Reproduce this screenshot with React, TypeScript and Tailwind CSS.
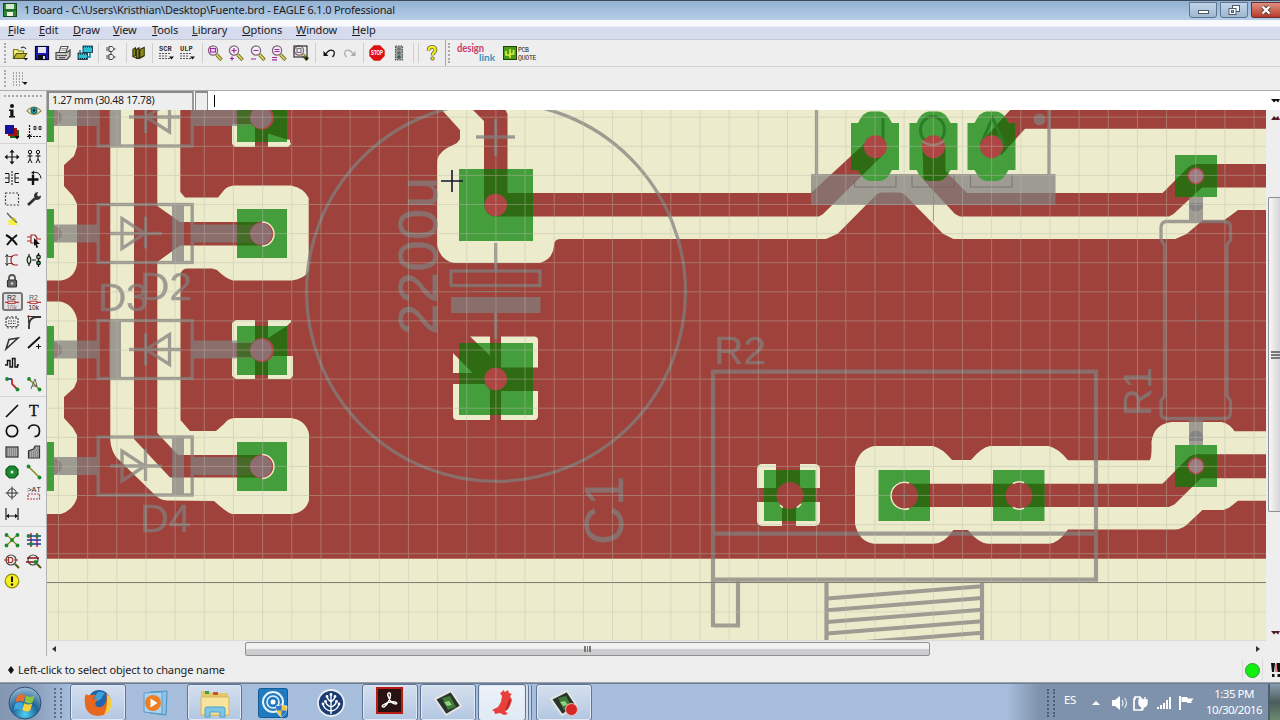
import type { ReactNode } from "react";

type IconProps = { children: ReactNode; size?: number };

const Icon = ({ children, size = 16 }: IconProps) => (
  <svg
    width={size}
    height={size}
    viewBox="0 0 16 16"
    fill="none"
    stroke="#111"
    strokeWidth={1.2}
  >
    {children}
  </svg>
);

const SEPARATOR = "w-px h-5 bg-[#cfcfcf]";
const GRIP = "border-dotted border-[#a9a9a9]";

/* ---------- Toolbar icons ---------- */

const Magnifier = ({ children }: { children?: ReactNode }) => (
  <Icon>
    <path d="M9.5 9.5 14.5 15" stroke="#77761f" strokeWidth={3.4} />
    <path d="M9.5 9.5 14 14.5" stroke="#e3df6a" strokeWidth={1.4} />
    <circle cx={6} cy={5.5} r={4.6} fill="#f6eef6" stroke="#7c6078" />
    {children}
  </Icon>
);

const ScriptIcon = ({ name }: { name: string }) => (
  <Icon>
    <text
      x={1}
      y={6}
      fontSize={7}
      fontWeight={700}
      fontFamily="Liberation Mono, monospace"
      fill="#333"
      stroke="none"
    >
      {name}
    </text>
    <path d="M1 8.5h11M1 11h9M1 13.5h11" stroke="#555" strokeDasharray="2 1" />
    <path d="M11 11.5h5l-2.5 3z" fill="#111" stroke="none" />
  </Icon>
);

const TOOLS: { w: string; icon?: ReactNode }[] = [
  {
    w: "w-[22px]",
    icon: (
      <Icon>
        <path d="M1.5 13.5v-9h4l1 1.5h5v2.5" fill="#f5f07a" stroke="#7d7a1c" />
        <path d="M1.5 13.5 4.5 8.5h10l-3 5z" fill="#b9b52d" stroke="#55530f" />
        <path d="M9 3q3-2 5 1" stroke="#333" />
        <path d="M11.5 13h4.5l-2.2 2.6z" fill="#111" stroke="none" />
      </Icon>
    ),
  },
  {
    w: "w-[21px]",
    icon: (
      <Icon>
        <rect x={1.5} y={1.5} width={13} height={13} fill="#1c1cae" stroke="#050535" />
        <rect x={4} y={2} width={8} height={6} fill="#e4e6ef" stroke="none" />
        <rect x={4} y={10} width={8} height={4.5} fill="#111" stroke="none" />
        <rect x={9} y={11} width={2} height={3} fill="#ddd" stroke="none" />
      </Icon>
    ),
  },
  {
    w: "w-[22px]",
    icon: (
      <Icon>
        <path d="M4 7 6 1.5h7L11 7" fill="#fff" stroke="#555" />
        <path d="M6.5 3.5h5M6 5.2h5" stroke="#777" strokeWidth={0.8} />
        <path d="M1 7.5h11l3-2.5v6l-3 3.5H1z" fill="#c9c9c9" stroke="#444" />
        <path d="M2 10.5h10M4 12.7h6" stroke="#555" />
        <circle cx={10.5} cy={9} r={0.7} fill="#bfae21" stroke="none" />
      </Icon>
    ),
  },
  {
    w: "w-[21px]",
    icon: (
      <Icon>
        <rect x={6} y={1} width={9.5} height={6.5} fill="#27c0d4" stroke="#123" strokeWidth={0.8} />
        <rect x={1} y={8} width={9.5} height={6.5} fill="#27c0d4" stroke="#123" strokeWidth={0.8} />
        <path d="M6 2h9.5M1 9h9.5M1 13.5h9.5" stroke="#111" strokeDasharray="1 1" />
        <path d="M3 5v3M13 8v4h-3" stroke="#187a9a" strokeWidth={1.5} />
      </Icon>
    ),
  },
  { w: "w-[6px]" },
  {
    w: "w-[19px]",
    icon: (
      <Icon>
        <path
          d="M6 1.5h3q4 2.5 0 5H6zM6 9.5h3q4 2.5 0 5H6zM3 3h3M3 5h3M3 11h3M3 13h3M10.5 4h2M10.5 12h2M8 6.5v3"
          stroke="#444"
          strokeWidth={1}
        />
      </Icon>
    ),
  },
  { w: "w-[12px]" },
  {
    w: "w-[14px]",
    icon: (
      <Icon>
        <path d="m1 4 3-2v9l-3 1zM5 4l3-2v11l-3 1zM9 4l5-2.5v9.5l-5 3z" fill="#8e8a1c" stroke="#33310a" />
        <path d="M1 12 7 14.5 14 11" stroke="#33310a" />
      </Icon>
    ),
  },
  { w: "w-[12px]" },
  { w: "w-[16px]", icon: <ScriptIcon name="SCR" /> },
  { w: "w-[26px]", icon: <ScriptIcon name="ULP" /> },
  { w: "w-[4px]" },
  {
    w: "w-[21px]",
    icon: (
      <Magnifier>
        <rect x={3.5} y={3.5} width={5} height={3.5} stroke="#a0259f" />
      </Magnifier>
    ),
  },
  {
    w: "w-[22px]",
    icon: (
      <Magnifier>
        <path d="M6 3v5M3.5 5.5h5M4 11.5v4M2 13.5h4" stroke="#a0259f" />
      </Magnifier>
    ),
  },
  {
    w: "w-[21px]",
    icon: (
      <Magnifier>
        <path d="M3.5 5.5h5M1 14h5" stroke="#a0259f" />
      </Magnifier>
    ),
  },
  {
    w: "w-[22px]",
    icon: (
      <Magnifier>
        <path d="M3.5 4.5h5M3.5 6.5h5M1 12.5h5M1 14.8h5" stroke="#a0259f" />
      </Magnifier>
    ),
  },
  {
    w: "w-[22px]",
    icon: (
      <Magnifier>
        <rect x={1} y={1} width={13} height={11} stroke="#333" />
        <rect x={4} y={3.5} width={4} height={4} stroke="#777" />
        <path d="M11 12.5h5l-2.5 3z" fill="#111" stroke="none" />
      </Magnifier>
    ),
  },
  { w: "w-[6px]" },
  {
    w: "w-[21px]",
    icon: (
      <Icon>
        <path d="M5 9q3-5 7-3.5 3 2.5-.5 6.500" />
        <path d="M2.5 6v5h5z" fill="#111" stroke="none" />
      </Icon>
    ),
  },
  {
    w: "w-[21px]",
    icon: (
      <Icon>
        <path d="M11 9Q8 4 4 5.5 1 8 4.500 12" stroke="#aaa" />
        <path d="M13.5 6v5h-5z" fill="#aaa" stroke="none" />
      </Icon>
    ),
  },
  { w: "w-[6px]" },
  {
    w: "w-[22px]",
    icon: (
      <Icon>
        <path d="M5 .3h6L15.7 5v6L11 15.7H5L.3 11V5z" fill="#e01010" stroke="none" />
        <text
          x={2}
          y={10.4}
          fontSize={6.4}
          fontWeight={700}
          fontFamily="Liberation Sans, sans-serif"
          fill="#fff"
          stroke="none"
          textLength={12}
          lengthAdjust="spacingAndGlyphs"
        >
          STOP
        </text>
      </Icon>
    ),
  },
  {
    w: "w-[22px]",
    icon: (
      <Icon>
        <rect x={4.5} y={1} width={7} height={14} fill="#9aa39c" stroke="#555" strokeDasharray="1.5 1" />
        <circle cx={8} cy={4} r={1.8} fill="#707a72" stroke="none" />
        <circle cx={8} cy={8} r={1.8} fill="#606a62" stroke="none" />
        <circle cx={8} cy={12} r={1.8} fill="#39634d" stroke="none" />
      </Icon>
    ),
  },
  { w: "w-[6px]" },
  { w: "w-[4px]" },
  {
    w: "w-[24px]",
    icon: (
      <Icon>
        <path d="M4.5 5.5Q4.5 2 8 2t3.5 3q0 1.5-2 3-1 1-1 2.3" stroke="#333" strokeWidth={3.6} />
        <path d="M4.5 5.5Q4.5 2 8 2t3.5 3q0 1.5-2 3-1 1-1 2.3" stroke="#f3ee16" strokeWidth={2.4} />
        <circle cx={8.5} cy={13.5} r={1.7} fill="#f3ee16" stroke="#333" strokeWidth={0.7} />
      </Icon>
    ),
  },
];

/* ---------- Left palette ---------- */

const GREEN = "#1c8a2c";
const dot = (cx: number, cy: number) => (
  <circle cx={cx} cy={cy} r={1.9} fill={GREEN} stroke="none" />
);

const infoIcon = (
  <Icon>
    <circle cx={8} cy={3} r={2} fill="#111" stroke="none" />
    <path d="M5 6.5h4.5V13H11v1.5H5V13h1.3V8H5z" fill="#111" stroke="none" />
  </Icon>
);
const showIcon = (
  <Icon>
    <path d="M1 8q7-8 14 0-7 7-14 0z" fill="#fff" stroke="#9a8c3e" />
    <circle cx={8} cy={7.5} r={3} fill="#29a3ab" stroke="#176a70" />
    <circle cx={8} cy={7.5} r={1.2} fill="#111" stroke="none" />
  </Icon>
);
const layersIcon = (
  <Icon>
    <rect x={6} y={6} width={9} height={8} fill="#156a1c" stroke="none" />
    <rect x={4} y={4} width={9} height={8} fill="#a11313" stroke="none" />
    <rect x={1} y={1} width={9} height={9} fill="#13139b" stroke="none" />
    <path d="M10.5 12h5L13 15.5z" fill="#111" stroke="none" />
  </Icon>
);
const markIcon = (
  <Icon>
    <path d="M3.5 1v14M1 12.5h14" strokeDasharray="2 1" />
    <path d="M1.5 10.5 3.5 12.5 5.5 10.5M8 2.5v3h2v-3zM13 2.5v3h2v-3z" strokeWidth={0.9} />
  </Icon>
);
const moveIcon = (
  <Icon>
    <path d="M8 2v12M2 8h12" />
    <path d="m8 .5 2.5 3h-5zM8 15.5l2.5-3h-5zM.5 8l3-2.5v5zM15.5 8l-3-2.5v5z" fill="#111" stroke="none" />
  </Icon>
);
const copyIcon = (
  <Icon>
    <circle cx={4} cy={3} r={1.7} strokeWidth={1} />
    <circle cx={12} cy={3} r={1.7} strokeWidth={1} />
    <path d="M4 5v5l-2 4M4 10l2 4M1.5 7h5M12 5v5l-2 4M12 10l2 4M9.5 7h5" strokeWidth={1} />
  </Icon>
);
const mirrorIcon = (
  <Icon>
    <path d="M1 3.5h4v9H1M1 8h4M15 3.5h-4v9h4M11 8h4" strokeWidth={1} />
    <path d="M8 1v14" strokeDasharray="2 1" strokeWidth={1} />
  </Icon>
);
const rotateIcon = (
  <Icon>
    <path d="M1.5 9.5h11M7 4.5v10.5" strokeWidth={2.4} />
    <path d="M7 2.5q7-1.5 8 6" strokeWidth={1} />
    <path d="M5 2.8 8 .8v3.5z" fill="#111" stroke="none" />
  </Icon>
);
const groupIcon = (
  <Icon>
    <rect x={1.5} y={2} width={13} height={12} strokeDasharray="2 1.5" stroke="#444" />
  </Icon>
);
const changeIcon = (
  <Icon>
    <path d="M2 14 9 7.5" stroke="#333" strokeWidth={2.8} />
    <path d="M8 4q1-3 4-3l-1 3 1.5 1.5 2.5-1q0 4-4 4.5-3 0-3-5z" fill="#333" stroke="none" />
  </Icon>
);
const cutIcon = (
  <Icon>
    <path d="M4 9h7l3 5H5z" fill="#f5f13c" stroke="none" />
    <path d="M3 2 9 8.5l4 3" stroke="#555" />
    <path d="m8 7 3 2.5" stroke="#b6b224" strokeWidth={2.5} />
  </Icon>
);
const deleteIcon = (
  <Icon>
    <path d="M2 3q6 3 11 10M13 3Q7 7 3 13" strokeWidth={2} />
  </Icon>
);
const addIcon = (
  <Icon>
    <path d="M5 3h4q4 4 0 8H5zM1 5h4M1 9h4M12 7h3" stroke="#a12b2b" />
    <path d="m8 6 6 6h-3l1 3.5-1.5.4L9.2 12.5 8 14z" fill="#111" stroke="none" />
  </Icon>
);
const pinswapIcon = (
  <Icon>
    <path d="M14 3h-3Q7 3 7 8t4 5h3M5 4.5h4M5 11.5h4" stroke="#a12b2b" />
    <path d="M3 3v10M1.5 5 3 2.5 4.5 5M1.5 11 3 13.5 4.5 11" stroke="#333" strokeWidth={1} />
  </Icon>
);
const replaceIcon = (
  <Icon>
    <ellipse cx={3} cy={8} rx={1.8} ry={3.5} fill="#ccebcc" stroke="#222" />
    <path d="M3 2v2.5M3 11.5V14M6 8h4M12.5 1v14" />
    <circle cx={12.5} cy={5} r={1.8} fill="#9c9" />
    <circle cx={12.5} cy={11} r={1.8} fill="#396" />
  </Icon>
);
const lockIcon = (
  <Icon>
    <path d="M5 7V5q0-3 3-3t3 3v2" stroke="#555" strokeWidth={1.8} />
    <rect x={3.5} y={7} width={9} height={7} rx={1} fill="#666" stroke="#333" />
    <circle cx={8} cy={10.5} r={1.3} fill="#ccc" stroke="none" />
  </Icon>
);

const TagIcon = ({ top, bottom, bold }: { top: string; bottom: string; bold?: boolean }) => (
  <Icon>
    <text x={3} y={6} fontSize={7} fontFamily="Liberation Sans, sans-serif" fill={bold ? "#111" : "#555"} stroke="none">
      {top}
    </text>
    <path d="M1 8.3h3M11 8.3h4" stroke="#b03030" />
    <rect x={4} y={7.2} width={7} height={2.4} stroke="#b03030" strokeWidth={0.9} />
    <text x={2.5} y={15.6} fontSize={6.5} fontFamily="Liberation Sans, sans-serif" fill={bold ? "#777" : "#111"} stroke="none">
      {bottom}
    </text>
  </Icon>
);

const nameIcon = (
  <span className="flex h-[19px] w-[21px] items-center justify-center rounded-[3px] border-2 border-[#777] bg-[#e2e2e2]">
    <TagIcon top="R2" bottom="10k" bold />
  </span>
);
const smashIcon = (
  <Icon>
    <rect x={2} y={4} width={12} height={8.5} stroke="#444" strokeDasharray="2 1" />
    <path d="M4 7h8M4 9.5h8M4 2v2M8 2v2M12 2v2M4 13v2M8 13v2M12 13v2" stroke="#444" strokeDasharray="1.5 1" />
  </Icon>
);
const miterIcon = (
  <Icon>
    <path d="M3 15V11Q3 4 10 3h5" stroke="#333" strokeWidth={1.8} />
    <path d="M2.5 9V2.5H9" stroke="#333" strokeWidth={1} />
    <circle cx={2.5} cy={2.5} r={1.2} fill="#a12b2b" stroke="none" />
  </Icon>
);
const splitIcon = (
  <Icon>
    <path d="M2 14 5 4.5 14 3zM5 4.5 2 14" stroke="#333" strokeWidth={1.5} />
  </Icon>
);
const optimizeIcon = (
  <Icon>
    <path d="m2 13 12-11" strokeWidth={1.8} />
    <path d="M12.5 9v5M10 11.5h5" strokeWidth={1} />
  </Icon>
);
const meanderIcon = (
  <Icon>
    <path d="M1 10h2.5V5.5H6V12h2.5V3.5H11V12h2.5v-2H15" strokeWidth={1.4} />
  </Icon>
);
const routeIcon = (
  <Icon>
    <path d="M3 3h5" stroke="#1b3fb0" strokeWidth={1.8} />
    <path d="M8 3v5l5 5" stroke="#c02828" strokeWidth={1.8} />
    {dot(3, 3)}
    {dot(13.5, 13.5)}
  </Icon>
);
const ripupIcon = (
  <Icon>
    <path d="m3 3 11 11" stroke="#8b8a20" strokeWidth={1.4} />
    <path d="M9 3 6 10h5zM6 10l-1 3" stroke="#444" strokeWidth={0.8} />
    {dot(3, 3)}
    {dot(13.5, 13.5)}
  </Icon>
);
const wireIcon = (
  <Icon>
    <path d="M2 14 14 2" strokeWidth={1.7} />
  </Icon>
);
const textIcon = (
  <Icon>
    <text x={8} y={13} textAnchor="middle" fontSize={16} fontFamily="Liberation Serif, serif" fill="#111" stroke="#111" strokeWidth={0.3}>
      T
    </text>
  </Icon>
);
const circleIcon = (
  <Icon>
    <circle cx={8} cy={8} r={5.7} strokeWidth={1.7} />
  </Icon>
);
const arcIcon = (
  <Icon>
    <path d="M2.5 6q1-4 5.5-4 5.5 0 5.5 6 0 5.5-5 5.7" strokeWidth={1.7} />
  </Icon>
);
const rectIcon = (
  <Icon>
    <rect x={2} y={3} width={12} height={10} fill="#aaa" stroke="#333" />
    <path d="M3 5h11M3 7h11M3 9h11M3 11h11" stroke="#666" strokeDasharray="1 1" />
  </Icon>
);
const polygonIcon = (
  <Icon>
    <path d="M2.5 14V7l5-2L9 2h4.5v12z" fill="#aaa" stroke="#333" />
    <path d="M3 8h10M3 10h10M3 12h10M8 6h5M9 4h5" stroke="#666" strokeDasharray="1 1" />
  </Icon>
);
const viaIcon = (
  <Icon>
    <path d="M5.5 2h5L14 5.5v5L10.5 14h-5L2 10.5v-5z" fill={GREEN} stroke="#0e5e1a" />
    <circle cx={8} cy={8} r={1.5} fill="#e8f5e8" stroke="none" />
  </Icon>
);
const signalIcon = (
  <Icon>
    <path d="m3 3 11 11" stroke="#8b8a20" strokeWidth={1.5} />
    {dot(2.5, 2.5)}
    {dot(13.5, 13.5)}
  </Icon>
);
const holeIcon = (
  <Icon>
    <circle cx={8} cy={8} r={4.2} stroke="#333" strokeWidth={1} />
    <path d="M8 1.5v13M1.5 8h13" stroke="#333" strokeWidth={1} />
  </Icon>
);
const attributeIcon = (
  <Icon>
    <text x={1} y={6.5} fontSize={8} fontFamily="Liberation Mono, monospace" fill="#333" stroke="none" textLength={14}>
      {">AT"}
    </text>
    <rect x={2} y={9} width={11.5} height={5} stroke="#b04040" strokeDasharray="2 1" />
  </Icon>
);
const dimensionIcon = (
  <Icon>
    <path d="M2 2v12M14 2v12M3 10h10" strokeWidth={1.1} />
    <path d="m2 10 3-2.2v4.4zM14 10l-3-2.2v4.4z" fill="#111" stroke="none" />
  </Icon>
);
const ratsnestIcon = (
  <Icon>
    <path d="m2 2 12 12M14 2 2 14" stroke="#8b8a20" />
    {dot(2.5, 3)}
    {dot(13.5, 3)}
    {dot(8, 8)}
    {dot(2.5, 13.5)}
    {dot(13.5, 13.5)}
  </Icon>
);
const autoIcon = (
  <Icon>
    <path d="M5 1v14M11 1v14" stroke="#c02828" strokeWidth={1.5} />
    <path d="M1 4h14M1 8h14M1 12h14" stroke="#2233a8" strokeWidth={1.5} />
    {dot(2.5, 4)}
    {dot(11, 4)}
    {dot(5, 12)}
  </Icon>
);
const ercIcon = (
  <Icon>
    <circle cx={7} cy={7} r={5} stroke="#444" />
    <path d="M4.5 4.5h3q3 2.5 0 5h-3zM0 7h4M10 7h4" stroke="#a12b2b" />
    <path d="m11 11 4 4" stroke="#55530f" strokeWidth={2} />
  </Icon>
);
const drcIcon = (
  <Icon>
    <circle cx={7} cy={7} r={5} stroke="#444" />
    <path d="M1 5h12M0 9h11" stroke="#8b1515" strokeWidth={1.6} />
    <path d="m11 11 4 4" stroke="#55530f" strokeWidth={2} />
    {dot(9.5, 9)}
  </Icon>
);
const errorsIcon = (
  <Icon>
    <circle cx={8} cy={8} r={6.8} fill="#f5f01b" stroke="#918d15" />
    <path d="M8 3.5V9" strokeWidth={2} />
    <circle cx={8} cy={11.5} r={1.2} fill="#111" stroke="none" />
  </Icon>
);

const PALETTE: { className: string; rows: ReactNode[][] }[] = [
  {
    className: "border-b pb-px mb-[3px]",
    rows: [
      [infoIcon, showIcon],
      [layersIcon, markIcon],
    ],
  },
  {
    className: "border-b pb-[2px] mb-[3px]",
    rows: [
      [moveIcon, copyIcon],
      [mirrorIcon, rotateIcon],
      [groupIcon, changeIcon],
      [cutIcon, null],
      [deleteIcon, addIcon],
      [pinswapIcon, replaceIcon],
      [lockIcon, null],
      [nameIcon, <TagIcon top="R2" bottom="10k" />],
      [smashIcon, miterIcon],
      [splitIcon, optimizeIcon],
      [meanderIcon, null],
      [routeIcon, ripupIcon],
    ],
  },
  {
    className: "border-b pb-[2px] mb-[3px]",
    rows: [
      [wireIcon, textIcon],
      [circleIcon, arcIcon],
      [rectIcon, polygonIcon],
      [viaIcon, signalIcon],
      [holeIcon, attributeIcon],
      [dimensionIcon, null],
    ],
  },
  {
    className: "",
    rows: [
      [ratsnestIcon, autoIcon],
      [ercIcon, drcIcon],
      [errorsIcon, null],
    ],
  },
];

const Palette = () => (
  <div className="w-[47px] shrink-0 border-r border-[#b4b4b4] bg-[#eeeeee] pt-1">
    <div className={`mx-1 mb-[4px] border-t-2 ${GRIP}`} />
    {PALETTE.map(({ className, rows }, i) => (
      <div key={i} className={`border-[#d4d4d4] ${className}`}>
        {rows.map((row, j) => (
          <div key={j} className="flex h-[20.6px] items-center pl-px">
            {row.map((icon, k) => (
              <div key={k} className="flex w-[22px] justify-center">
                {icon}
              </div>
            ))}
          </div>
        ))}
      </div>
    ))}
  </div>
);

/* ---------- Board ---------- */

const GRID_X = Array.from({ length: 42 }, (_, i) => 58.5 + 29.16 * i);
const GRID_Y = Array.from({ length: 18 }, (_, i) => 117.2 + 29.1 * i);

const SQUARE_PADS = [
  [22, 93, 32, 49],
  [22, 209, 32, 49],
  [22, 326, 32, 49],
  [22, 442, 32, 49],
  [237, 93, 50, 49],
  [237, 209, 50, 49],
  [237, 326, 50, 49],
  [237, 442, 50, 49],
  [459, 169, 74, 72],
  [459, 343, 74, 72],
  [1175, 155, 42, 42],
  [1175, 445, 42, 42],
  [764, 470, 51.5, 51],
  [878.5, 470, 51.5, 51],
  [993, 470, 51.5, 51],
];

const Pads = () => (
  <>
    {SQUARE_PADS.map(([x, y, w, h]) => (
      <rect key={`${x}-${y}`} x={x} y={y} width={w} height={h} />
    ))}
    {[875, 933.5, 991.5].map((x) => (
      <path
        key={x}
        d={`M${x - 24} 123h7q5-11 12-11.5h10q7 .5 12 11.5h7v47h-7q-5 10.5-12 11h-10q-7-.5-12-11h-7z`}
      />
    ))}
  </>
);

const Traces = () => (
  <>
    {/* diode column */}
    <path d="M134 100V439L170 477.5H262V455H178L157.3 433V262L180 245.5H262V222H180L157.3 206V100z" />
    {/* thermal spokes of the diode pads */}
    <path d="M255 108h40v32l-8-.5-19-6V150h-13zM230 110h30v14h-30z" />
    <path d="M255 316h13v22l19-12 7-4v34h-26v28h-13zM230 343h30v14h-30z" />
    {/* C1 + */}
    <path d="M472 109 484 121V205q2 11.5 12 11.5H819L823 214 885 153 864 144 811 193H507.5V114L505 109z" />
    {/* C1 - */}
    <path d="M490 330h11v37.5h45V391h-45v35h-11v-36l-5-6h-35v-11h22.7L447 347v-15h18.5L490 355.7z" />
    {/* regulator */}
    <path d="M922.5 147h23v24L967 193H1162.5L1188 167.5q4-3.5 9-3.5H1266v23.5H1202L1173.5 214l-4.5 2.5H960L955 214 923.5 180z" />
    <path d="M982 141 1011 109H1270V128.7H1025L1001.5 155z" />
    {/* trimmer */}
    <path d="M776 460h24v28h24v14h-28v28h-14v-28h-28v-14h22z" />
    <path d="M904 483.7H1162.5L1188 458q4-3.7 9-3.7H1266v24H1201L1174.7 504.3 1169 507H904z" />
    <circle cx={262} cy={117.5} r={12} />
    <circle cx={262} cy={350} r={12} />
  </>
);

const DRILLS = [
  [495.7, 205, 11.3],
  [495.7, 379, 11.3],
  [875.4, 146.7, 11.5],
  [933.5, 146.7, 11.5],
  [991.5, 146.7, 11.5],
  [1196, 176, 8.5],
  [1196, 466, 8.5],
  [262, 117.5, 12],
  [262, 233.8, 12],
  [262, 350, 12],
  [262, 466.5, 12],
];

type DiodeProps = { y: number; flip?: boolean };

const Diode = ({ y, flip }: DiodeProps) => (
  <>
    <path
      d={`M54 ${y - 9}H98v18H54zM193 ${y - 9}H237v18H193z`}
      fill="#827f7d"
      stroke="none"
    />
    <rect x={flip ? 109 : 172} y={y - 29} width={12} height={58} fill="#827f7d" stroke="none" />
    <rect x={98.2} y={y - 29} width={94} height={58} />
    {flip ? (
      <path d={`M129 ${y}H181M169.5 ${y - 15}v30L146 ${y}zM145.5 ${y - 16}v32`} />
    ) : (
      <path d={`M110 ${y}H162M122 ${y - 15}v30L145 ${y}zM145.5 ${y - 17}v32`} />
    )}
  </>
);

const THREADS = [598.5, 610.3, 622, 633.5, 645];

const Board = () => (
  <svg className="block h-[530px] w-[1219px]" viewBox="47 110 1219 530">
    <defs>
      <clipPath id="pads">
        <Pads />
      </clipPath>
    </defs>

    <rect x={47} y={110} width={1219} height={530} fill="#ececcc" />
    <rect x={47} y={110} width={1219} height={448.7} fill="#9e423b" />

    {/* clearance around the copper */}
    <g fill="#ececcc">
      <path d="M47 110H77V147L74 156 64 165V186L73 196 77 204V264Q75 278 61 280.5H47z" />
      <path d="M47 301.5H59Q73 303 77 319V381L74 388 64 397V418L73 428 77 435V498Q73 510 61 514H47z" />
      <path d="M110.3 110H180.3V192L185 197.6H218L225 189Q229 185.5 235 185.5H291Q304 188 308.7 198V271Q304 279 292 280.5H233Q226 279 217 270L212 268.5H187Q181 269 180.5 275V420L190 431H216L224 424Q228 418 235 418H291Q306 420 309 434V500Q306 512 292 514H232Q226 512 214 501L167 500.5Q160 500 155 495L116 457Q111 450 110.3 440z" />
      <path d="M232 100H290V142L291 144 288 147H235L232 144z" />
      <path d="M236 320H291V322L287 326 293 356V376L290 379H236L232 376V323z" />
      <path d="M441 109 460 130V139L457 143 447 148Q437 154 437 163V245Q440 260 454 263H540Q553 259 554 246 554 239 560 239H826L837.6 233.7 877 194Q879 192.5 882 192.5H900L904 194 943 233.7 953.4 239H1175.4L1186.5 234 1202.4 220.5H1223.5L1230 216 1238 210H1266V109z" />
      <rect x={453} y={336.5} width={85} height={83.5} rx={4} />
      <rect x={757} y={464} width={63} height={62} rx={5} />
      <path d="M874 446H933Q942 448 952 460H971Q982 447 990 446H1048.5Q1058 448 1068 460.3H1149.5Q1152 459 1151.5 441.7 1154 424 1171.7 422H1221.6Q1230 424 1234.6 431.3H1266V500.7H1238L1229 507.7 1223.5 510H1202.4L1186.5 525Q1181 529.3 1175 529.5H1068Q1058 543.7 1049 543.7H988Q978 543 968 530H953.4Q944 543.7 934 543.7H874Q859 542 855 524V466Q859 449 874 446z" />
    </g>

    <g fill="#9e423b">
      <Traces />
    </g>

    {/* silkscreen */}
    <g fill="none" stroke="#827f7d" strokeWidth={3.3} opacity={0.73}>
      <Diode y={117} flip />
      <Diode y={233.5} />
      <Diode y={349.5} flip />
      <Diode y={466} />

      <circle cx={496} cy={291.8} r={189.5} />
      <path d="M476 137H515M495.7 119V156M495.7 243V271M495.7 313V339" />
      <rect x={451} y={271} width={89} height={14.5} />
      <rect x={451} y={297} width={89.5} height={16} fill="#827f7d" stroke="none" />

      <path d="M816.5 110V175M1049 110V175" />
      <rect x={811} y={174} width={244.5} height={31} fill="#827f7d" stroke="none" />
      <circle cx={1039.5} cy={119.5} r={6} fill="#827f7d" stroke="none" />

      <path d="M1189 197h14v24h-14zM1189 420h14v26h-14z" fill="#827f7d" stroke="none" />
      <path d="M1166 221.5H1225Q1230.5 222 1230.5 227V240L1227 245V396L1230.5 401V413Q1230 418.5 1225 418.5H1166Q1161 418 1161 413V401L1164.5 396V245L1161 240V227Q1161.5 222 1166 221.5z" />

      <path
        d="M713 627V371.7H1096V579.7H713M713 533.7H1096M713 625.5H738V580M826.5 582V640M982 582V640"
        strokeWidth={4.2}
      />
      {THREADS.map((y) => (
        <path key={y} d={`M827 ${y} 982 ${y - 12.2}`} strokeWidth={4} />
      ))}
    </g>
    <g
      fill="#827f7d"
      stroke="#827f7d"
      strokeWidth={0.4}
      opacity={0.73}
      fontFamily="Liberation Sans, Arial, sans-serif"
    >
      <g fontSize={38}>
        <text x={98} y={310.5} textLength={50} lengthAdjust="spacingAndGlyphs">D3</text>
        <text x={140} y={299.7} textLength={52} lengthAdjust="spacingAndGlyphs">D2</text>
        <text x={140} y={531.7} textLength={51} lengthAdjust="spacingAndGlyphs">D4</text>
        <text x={714} y={363.7} textLength={52} lengthAdjust="spacingAndGlyphs">R2</text>
        <text transform="translate(1151 416) rotate(-90)">R1</text>
      </g>
      <g fontSize={56}>
        <text transform="translate(437 335) rotate(-90)" textLength={158} lengthAdjust="spacingAndGlyphs">2200u</text>
        <text transform="translate(623 545) rotate(-90)" textLength={69} lengthAdjust="spacingAndGlyphs">C1</text>
      </g>
    </g>

    {/* pads */}
    <g fill="#459e3c">
      <Pads />
    </g>
    <g fill="#2f6b12" clipPath="url(#pads)">
      <Traces />
    </g>
    <g fill="none" stroke="#2a7d26" strokeWidth={3}>
      <path d="M883 118V144M981 144 992.6 118 1004 144M984 137H1001" />
      <ellipse cx={932.5} cy={130} rx={12} ry={13.5} />
    </g>
    <g fill="#ad4643">
      {DRILLS.map(([x, y, r]) => (
        <circle key={`${x}-${y}`} cx={x} cy={y} r={r} />
      ))}
    </g>
    <g fill="#9e423b">
      <circle cx={790} cy={495.5} r={13.5} />
      <circle cx={904.5} cy={495.5} r={13.5} />
      <circle cx={1019} cy={495.5} r={13.5} />
    </g>
    <g fill="none" stroke="#ececcc" strokeWidth={1.5}>
      <path d="M262 222a12 12 0 0 1 0 24M262 454.5a12 12 0 0 1 0 24" />
      <path d="M909 483a13.5 13.5 0 1 0 0 25.5" />
      <path d="M1013 483.5a13.5 13.5 0 0 1 11-.8M1013 507.5a13.5 13.5 0 0 0 11 .8M780 505a13.5 13.5 0 0 0 3 2.5M797 507.5a13.5 13.5 0 0 0 4-3.5" />
    </g>
    <g fill="#8c6d70">
      {[117.5, 233.8, 350, 466.5].map((y) => (
        <g key={y}>
          <circle cx={261} cy={y} r={10.8} />
          <rect x={237} y={y - 9} width={15} height={18} opacity={0.25} />
          <path d={`M54 ${y - 8}q8 2 8 8t-8 8z`} opacity={0.6} />
        </g>
      ))}
      <circle cx={1196} cy={176} r={7} fill="#9a7c80" />
      <circle cx={1196} cy={466} r={7} fill="#9a7c80" />
      <path d="M1189 203h14q0 8-7 8.5-7-.5-7-8.5zM1189 438q0-7 7-7.5 7 .5 7 7.5v3h-14z" fill="#848484" />
      <path d="M922 141q11 8 22 0" fill="none" stroke="#a07a70" strokeWidth={2.5} />
    </g>

    {/* thin reference lines */}
    <g fill="none" stroke="#6b6560" strokeWidth={1}>
      <path d="M854.5 181V187H896V175M912 175V187H954V175M970.5 175V187H1012V175M933.5 187V221" opacity={0.7} />
      <path d="M472 291.5H520M495.7 271V313M1184 320.5H1208M1196 308V333M899 495.5H910M904.5 490V501" opacity={0.6} />
      <path d="M47 582.5H1266" />
    </g>

    {/* grid */}
    <g stroke="#bdbcae" strokeWidth={1} opacity={0.42}>
      {GRID_X.map((x) => (
        <path key={x} d={`M${x} 110V640`} />
      ))}
      {GRID_Y.map((y) => (
        <path key={y} d={`M47 ${y}H1266`} />
      ))}
    </g>

    <path d="M441 181H463M452 170V192" stroke="#151530" strokeWidth={1.6} />
  </svg>
);

/* ---------- Taskbar ---------- */

const TASK_BUTTON =
  "flex h-[37px] shrink-0 items-center justify-center rounded-[3px] border border-[#5f7796] bg-linear-to-b from-[#d5e0ef] to-[#b3c7e2] shadow-[inset_0_0_0_1px_#dfe8f4]";
const TASK_PLAIN = "flex h-[37px] shrink-0 items-center justify-center";

const Camtasia = ({ recording }: { recording?: boolean }) => (
  <svg width={30} height={30} viewBox="0 0 30 30">
    <path d="M2 11 18 3l10 15-15 9z" fill="#2b342b" stroke="#e4e6e2" strokeWidth={2} />
    <path d="m9 10 8-2 6 11-8 3z" fill="#3f7a38" />
    <path d="m11 14 5-1 3 4-5 1z" fill="#8fd07c" />
    {recording && <circle cx={22.5} cy={21.5} r={6} fill="#d62727" stroke="#f3b8b8" />}
  </svg>
);

const Taskbar = () => (
  <div className="flex h-[38px] items-center border-t border-[#6d7f96] bg-[#a6bddc] font-['Noto_Sans',sans-serif]">
    <div className="flex h-full w-[70px] shrink-0 items-center bg-linear-to-r from-[#8497b2] via-[#8ca0bd] to-[#a6bddc] pl-2">
      <svg width={34} height={34} viewBox="0 0 34 34">
        <defs>
          <radialGradient id="orb" cx=".5" cy=".85" r=".8">
            <stop offset="0" stopColor="#4fd0f2" />
            <stop offset=".5" stopColor="#1d6596" />
            <stop offset="1" stopColor="#8fb3cf" />
          </radialGradient>
        </defs>
        <circle cx={17} cy={17} r={16} fill="url(#orb)" stroke="#2f4e70" />
        <path d="M9 10q4-3 8-1l-1.5 7q-4-2-8 .5z" fill="#ea6a30" />
        <path d="M18 9.5q4 2.5 8.5 0l-2 7q-4 2-8-.5z" fill="#8cc63e" />
        <path d="M7.2 17.8q4-3 8-.8L13.5 24q-4-2-8 .5z" fill="#3fa5e0" />
        <path d="M16.2 17.2q4 2.5 8 .3l-2 7q-4 2-8-.5z" fill="#f8cf3c" />
      </svg>
      <div className="ml-[12px] h-[30px] w-[8px] border-x-2 border-dotted border-[#5b6f8a]" />
    </div>

    <div className={`${TASK_BUTTON} w-[56px]`}>
      <svg width={30} height={30} viewBox="0 0 30 30">
        <circle cx={16} cy={13} r={11} fill="#1e66ad" />
        <path d="M14 5q4-3 8 1-3 1-3 4l-4 3-4-2z" fill="#3fa3da" />
        <path d="M3 6q2 2 5 1 4-1 6 1-3 0-4 3 3 0 5 1-4 2-2 6 4 3 8-1 4-5 2-12 6 5 5 12-2 11-13 11Q3 27 2 16 1 9 3 6z" fill="#e6671f" />
        <path d="M24 6q6 6 4 13-2 6-7 8 4-8 3-21z" fill="#f8cf3c" />
      </svg>
    </div>
    <div className={`${TASK_PLAIN} w-[61px] pr-1`}>
      <svg width={26} height={26} viewBox="0 0 26 26">
        <path d="m8 2 17-1-1 24-16-2z" fill="#8ec3e5" stroke="#4a8fc0" />
        <path d="m2 3 18-1v22L2 22z" fill="#a9d3ee" stroke="#5d9cc7" />
        <circle cx={11} cy={13} r={8} fill="#ee7f22" />
        <path d="m8.5 8.5 7 4.5-7 4.5z" fill="#fff" />
      </svg>
    </div>
    <div className={`${TASK_BUTTON} w-[55px]`}>
      <svg width={32} height={30} viewBox="0 0 32 30">
        <path d="M2 6V3h8l2 2h17v23H2z" fill="#e3c768" />
        <path d="M6 3h4v3H6z" fill="#3f9e48" />
        <path d="M14 4h5v3h-5z" fill="#d2502d" />
        <path d="M2 9h28v18H2z" fill="#f6e49e" stroke="#d3b65a" />
        <path d="M6 29v-8q0-2 2-2h16q2 0 2 2v8h-5v-5H11v5z" fill="#7cc6ea" stroke="#4d9ec8" />
      </svg>
    </div>
    <div className={`${TASK_PLAIN} w-[61px]`}>
      <svg width={30} height={30} viewBox="0 0 30 30">
        <rect x={0.5} y={0.5} width={29} height={29} rx={2} fill="#1f7abf" stroke="#155b95" />
        <circle cx={15} cy={14} r={10} fill="none" stroke="#e8f3fa" strokeWidth={2} />
        <circle cx={15} cy={14} r={6} fill="none" stroke="#e8f3fa" strokeWidth={1.6} />
        <circle cx={15} cy={14} r={2.5} fill="#fff" />
        <path d="M18 18q5 0 5.5-2 .5 2 5.5 2 0 8-5.5 11-5.5-3-5.5-11z" fill="#f2c832" stroke="#fff" strokeWidth={0.7} />
        <path d="M23.5 16.5v6H18.5q-.5-2-.5-4.5 5 0 5.5-1.5zM23.5 22.5H28.5q-1 4-5 6.5z" fill="#2f74d0" />
      </svg>
    </div>
    <div className={`${TASK_PLAIN} w-[57px] pr-0.5`}>
      <svg width={28} height={28} viewBox="0 0 28 28" fill="none" stroke="#fff" strokeWidth={1.4}>
        <circle cx={14} cy={14} r={13} fill="#1b3c72" stroke="#e9eef5" strokeWidth={1.8} />
        <path d="M14 25V6M14 22q-7-1-8-7M14 18q-5-2-5-5M14 22q7-1 8-7M14 18q5-2 5-5M14 13q-3-2-4-5M14 13q3-2 4-5" />
        <g fill="#fff" stroke="none">
          <circle cx={14} cy={5.5} r={1.4} />
          <circle cx={10} cy={7.5} r={1.4} />
          <circle cx={18} cy={7.5} r={1.4} />
          <circle cx={8.5} cy={12.5} r={1.4} />
          <circle cx={19.5} cy={12.5} r={1.4} />
          <circle cx={6} cy={15} r={1.4} />
          <circle cx={22} cy={15} r={1.4} />
        </g>
      </svg>
    </div>
    <div className={`${TASK_BUTTON} ml-[1.5px] w-[56px]`}>
      <svg className="mb-1" width={27} height={27} viewBox="0 0 27 27">
        <rect width={27} height={27} fill="#b81b12" />
        <rect x={2} y={2} width={23} height={23} fill="#2a1212" />
        <path d="M12.5 6q3-1 1.5 5-2 6-6 9-3 0-1-2 6-4 12-3 3 1 1 2-5 0-7.5-7-1.5-3 0-4z" fill="none" stroke="#fff" strokeWidth={1.4} />
      </svg>
    </div>
    <div className={`${TASK_BUTTON} ml-[2px] w-[56px]`}>
      <Camtasia />
    </div>
    <div className={`${TASK_BUTTON} ml-[2px] w-[48px] from-[#eef2f8] to-[#e0e9f4]`}>
      <svg width={24} height={32} viewBox="0 0 24 32">
        <path d="m12 5 1-2 2 2 3-2 1 3 3 1-2 2 2 4-2 6-3 4-2 1 3 3-4 1-4-2-5 1-1-3-2-1 6-3 3-5 1-6-2-3z" fill="#e8403a" />
        <path d="m19 12 2 1-3 9-3 2z" fill="#b82a28" />
      </svg>
    </div>
    <div className="h-[37px] w-[3px] rounded-r-[3px] border-r border-[#5f7796] bg-[#d3deed]" />
    <div className="h-[37px] w-[3px] rounded-r-[3px] border-r border-[#5f7796] bg-[#c2d1e6]" />
    <div className={`${TASK_BUTTON} ml-[4px] w-[56px]`}>
      <Camtasia recording />
    </div>

    <div className="ml-auto flex h-full w-[273px] items-center bg-linear-to-r from-[#a6bddc] via-[#7f92ac] via-12% to-[#7f92ab] text-white">
      <div className="ml-[40px] h-[28px] w-[8px] border-x-2 border-dotted border-[#4c5d75]" />
      <span className="ml-[9px] mt-[-6px] w-[22px] text-[11.5px] leading-[16px] tracking-[-0.4px]">
        ES
      </span>
      <svg className="ml-[2px] mr-[4px] shrink-0" width={114} height={20} viewBox="0 0 114 20" fill="#fff">
        <path d="M4 12h8L8 8z" />
        <path d="M24 7h3l5-4v14l-5-4h-3z" />
        <path d="M34 7q2 3 0 6M36.5 5q4 5 0 10" fill="none" stroke="#e4e9f0" strokeWidth={1.2} />
        <path d="M47 4h5v2h2v11h-8V6h1z" fill="none" stroke="#fff" strokeWidth={1.7} />
        <path d="M51 7h8v4q-1 3-4 3t-4-3zM52.5 4v3M57 4v3M55 13v4" stroke="#fff" strokeWidth={1.3} />
        <path d="M69 14h2v2h-2zM72 12h2v4h-2zM75 10h2v6h-2zM78 7h2v9h-2zM81 4h2v12h-2z" />
        <path d="M91 3h2v14h-2zM93.5 4h6v1.5h6L103 9l1 1h-5V9h-5.5z" />
      </svg>
      <div className="w-[56px] shrink-0 whitespace-nowrap pb-px text-center text-[11.5px] leading-[16px] tracking-[-0.5px]">
        <p>1:35 PM</p>
        <p>10/30/2016</p>
      </div>
      <div className="ml-auto h-full w-[12px] shrink-0 border-l-2 border-[#4d5d70] bg-linear-to-b from-[#8a9bae] via-[#4a5d5c] to-[#6f8c70]" />
    </div>
  </div>
);

/* ---------- Window ---------- */

const MENU = [
  ["File", "w-[31px]"],
  ["Edit", "w-[34px]"],
  ["Draw", "w-[40px]"],
  ["View", "w-[39px]"],
  ["Tools", "w-[40px]"],
  ["Library", "w-[50px]"],
  ["Options", "w-[54px]"],
  ["Window", "w-[56px]"],
  ["Help", "w-[40px]"],
];

const CAPTION_BUTTON =
  "flex h-[16px] items-center justify-center rounded-b-[3px] border border-[#5d7490] bg-linear-to-b from-[#c3d4e8] to-[#9fb7d3]";

const App = () => (
  <div className="flex h-[720px] w-[1280px] flex-col overflow-hidden bg-[#eeeeee] font-['Noto_Sans','Open_Sans',sans-serif] text-[#1c1c1c]">
    {/* Title bar */}
    <div className="flex h-[20px] shrink-0 items-center border-t border-[#3d4a5a] bg-linear-to-b from-[#93b1d3] to-[#b7cde6] pb-px pl-[3px]">
      <svg width={14} height={14} viewBox="0 0 14 14">
        <rect x={0.5} y={0.5} width={13} height={13} fill="#2f8a35" stroke="#14481b" />
        <rect x={3} y={1} width={8} height={5} fill="#d8e6d0" />
        <rect x={4} y={9} width={6} height={4} fill="#f2f2e4" />
        <path d="M1 7h12" stroke="#164d1e" />
      </svg>
      <span className="ml-[7px] whitespace-nowrap text-[11px] tracking-[-0.21px]">
        1 Board - C:\Users\Kristhian\Desktop\Fuente.brd - EAGLE 6.1.0 Professional
      </span>
      <div className="ml-auto flex gap-[3px]">
        <div className={`${CAPTION_BUTTON} w-[28px]`}>
          <div className="mt-[3px] h-[4px] w-[11px] border border-[#4d5a68] bg-white" />
        </div>
        <div className={`${CAPTION_BUTTON} w-[28px]`}>
          <svg width={13} height={11} viewBox="0 0 13 11" fill="#fff" stroke="#4d5a68">
            <rect x={4.5} y={0.5} width={7} height={6} />
            <rect x={1} y={3.5} width={7} height={6} />
            <rect x={3.5} y={5.5} width={2} height={2} fill="#9fb7d3" />
          </svg>
        </div>
        <div className="flex h-[16px] w-[29px] items-center justify-center rounded-bl-[3px] border border-r-0 border-[#6d2f2b] bg-linear-to-b from-[#dd8f82] to-[#b8382a]">
          <svg width={12} height={10} viewBox="0 0 12 10">
            <path d="m2.5 1.5 7 7M9.5 1.5l-7 7" stroke="#5e3a38" strokeWidth={4} />
            <path d="m2.5 1.5 7 7M9.5 1.5l-7 7" stroke="#fff" strokeWidth={2.4} />
          </svg>
        </div>
      </div>
    </div>

    {/* Menu */}
    <div className="flex h-[20px] shrink-0 items-center border-b border-[#c3c8d4] bg-linear-to-b from-[#f7f9fd] from-30% to-[#d6dbee] to-40% pl-[8px] pt-[2px] text-[11px] tracking-[-0.1px]">
      {MENU.map(([label, width]) => (
        <span key={label} className={width}>
          <u className="underline-offset-1">{label[0]}</u>
          {label.slice(1)}
        </span>
      ))}
    </div>

    {/* Toolbar */}
    <div className="flex h-[27px] shrink-0 items-center border-b border-[#d2d2d2]">
      <div className={`ml-1 mr-[3px] h-5 border-l-2 ${GRIP}`} />
      {TOOLS.map((tool, i) => (
        <div key={i} className={`flex shrink-0 justify-center ${tool.w}`}>
          {tool.icon === undefined ? <div className={SEPARATOR} /> : tool.icon}
        </div>
      ))}
      <div className="ml-px h-[26px] w-px bg-[#a8a8a8]" />
      <div className={`ml-[2px] h-5 border-l-2 ${GRIP}`} />
      <svg className="ml-[7px]" width={40} height={20} viewBox="0 0 40 20" fontFamily="Lato, sans-serif" fontWeight={700}>
        <text x={0} y={9} fontSize={10.5} fill="#c93a66" textLength={27} lengthAdjust="spacingAndGlyphs">
          design
        </text>
        <text x={22} y={18} fontSize={9} fill="#3a93bf" textLength={16} lengthAdjust="spacingAndGlyphs">
          link
        </text>
      </svg>
      <svg className="ml-[6px]" width={36} height={16} viewBox="0 0 36 16" fontFamily="Liberation Mono, monospace">
        <rect x={0.5} y={1.5} width={13} height={13} fill="#4c9a1c" stroke="#20430c" />
        <path d="M3 6v4h4v3M7 10V4M10.5 5v4H7" stroke="#d7ee3b" strokeWidth={1.7} fill="none" />
        <text x={15} y={7} fontSize={6.5} fill="#222" textLength={11}>
          PCB
        </text>
        <text x={15} y={15} fontSize={6.5} fill="#222" textLength={18.5}>
          QUOTE
        </text>
      </svg>
    </div>
    <div className="flex h-[24px] shrink-0 items-center border-b border-[#acacac]">
      <div className={`ml-1 h-[17px] border-l-2 ${GRIP}`} />
      <svg className="ml-[6px]" width={16} height={14} viewBox="0 0 16 14">
        <path
          d="M1 1h12M1 4h12M1 7h12M1 10h12M1 13h9"
          stroke="#555"
          strokeDasharray="1 2"
        />
        <path d="M10.5 10h5L13 13z" fill="#111" />
      </svg>
    </div>

    {/* Workspace */}
    <div className="flex h-[565px] shrink-0">
      <Palette />
      <div className="flex w-[1219px] shrink-0 flex-col">
        <div className="flex h-[19px] bg-white text-[10.5px]">
          <div className="flex w-[147px] items-center border-2 border-b-0 border-[#8a8a8a] border-r-[#9a9a9a] bg-[#eeeeee] pb-px pl-[3px] tracking-[-0.3px]">
            1.27 mm (30.48 17.78)
          </div>
          <div className="ml-px w-[13px] border-x border-t-2 border-[#8a8a8a] bg-[#eeeeee]" />
          <div className="my-auto ml-[6px] h-[12px] w-px bg-black" />
        </div>
        <Board />
        <div className="flex h-[16px] items-center border-t border-[#dcdcdc] bg-[#ededed]">
          <div className="ml-[5px] border-y-[3px] border-r-[4px] border-y-transparent border-r-[#333]" />
          <div className="ml-[189px] flex h-[14px] w-[685px] items-center justify-center gap-px rounded-[2px] border border-[#8f8f8f] bg-linear-to-b from-[#f2f2f2] from-45% to-[#cdcdd0] to-55%">
            <div className="h-[6px] w-[1.5px] bg-[#777]" />
            <div className="h-[6px] w-[1.5px] bg-[#777]" />
            <div className="h-[6px] w-[1.5px] bg-[#777]" />
          </div>
          <div className="ml-auto mr-[6px] border-y-[3px] border-l-[4px] border-y-transparent border-l-[#333]" />
        </div>
      </div>
      <div className="flex grow flex-col bg-[#eeeeee]">
        <div className="flex h-[19px] items-center justify-end bg-white">
          <svg width={9} height={4} viewBox="0 0 9 4">
            <path d="M0 0h9L7 3.5 5 1.5 3 3.5z" fill="#111" />
          </svg>
        </div>
        <svg className="ml-auto mt-[6px]" width={9} height={4} viewBox="0 0 9 4">
          <path d="m0 4 3-4 2 2 2-2 2 4z" fill="#501b26" />
        </svg>
        <div className="ml-[2px] mt-[77px] flex h-[315px] flex-col items-end justify-center gap-px rounded-l-[2px] border border-r-0 border-[#8f8f8f] bg-linear-to-r from-[#f7f7f7] to-[#d6d6da]">
          <div className="h-[2px] w-[9px] bg-[#777]" />
          <div className="h-[2px] w-[9px] bg-[#777]" />
          <div className="h-[2px] w-[9px] bg-[#777]" />
        </div>
        <svg className="ml-auto mt-[119px]" width={9} height={4} viewBox="0 0 9 4">
          <path d="M0 0h9L7 3.5 5 1.5 3 3.5z" fill="#501b26" />
        </svg>
      </div>
    </div>

    {/* Status bar */}
    <div className="flex h-[27px] shrink-0 items-center border-b border-[#9a9fa6] pl-[8px] pt-[2px] text-[11px] tracking-[-0.14px]">
      <svg width={6} height={8} viewBox="0 0 6 8">
        <path d="m3 0 3 4-3 4-3-4z" fill="#111" />
      </svg>
      <span className="ml-[4px]">Left-click to select object to change name</span>
      <div className="ml-auto flex h-[22px] w-[21px] items-center justify-center border-x border-[#dadada]">
        <div className="size-[15px] rounded-full border border-[#2f9b2f] bg-[#12f012]" />
      </div>
      <svg className="ml-[8px]" width={9} height={15} viewBox="0 0 9 15">
        <path d="M0 0h4L3 9H1zM5.5 0h4v9h-3zM1 11h2.5v3H1zM6.5 11h3v3h-3z" fill="#111" />
        <path d="M5 1v8" stroke="#d22" />
      </svg>
    </div>

    <Taskbar />
  </div>
);

export default App;
